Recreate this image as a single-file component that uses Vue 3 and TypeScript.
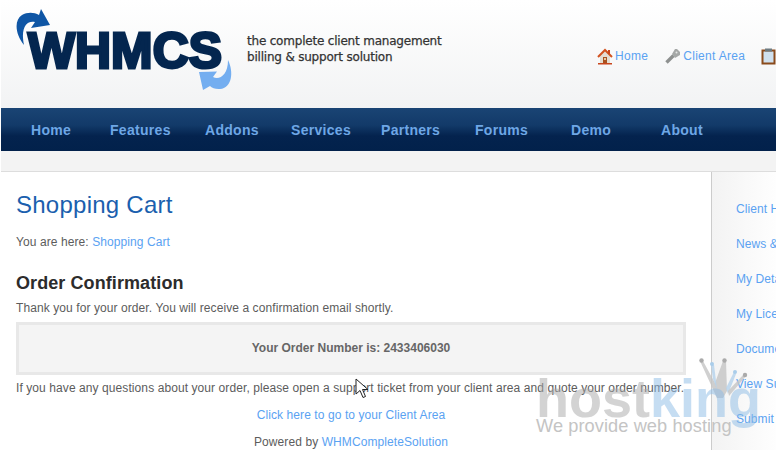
<script setup lang="ts">
const navItems = ['Home', 'Features', 'Addons', 'Services', 'Partners', 'Forums', 'Demo', 'About']
const sideLinks = ['Client Home', 'News & Updates', 'My Details', 'My Licenses', 'Documentation', 'View Support Tickets', 'Submit Ticket']
</script>

<template>
  <div class="page">
    <header class="top">
      <svg class="logo" width="222" height="86" viewBox="15 7 222 86">
        <text class="logo-text" x="28" y="67.5" textLength="194" lengthAdjust="spacingAndGlyphs">WHMCS</text>
        <path fill="#0f56a5" d="M24 45C15 34 14 20 22 15C27 12 34 12 39 15L41 9L50 25L31 28L35 22C28 20 20 26 24 45Z" />
        <path fill="#74aef0" d="M228 60C234 72 232 88 220 89C216 89.5 212 88 210 86L203 90L199 72L217 71.5L213 77C219 80 228 76 228 60Z" />
      </svg>
      <div class="tagline">the complete client management<br />billing &amp; support solution</div>
      <div class="toplinks">
        <a class="toplink">
          <svg width="16" height="17" viewBox="0 0 16 17">
            <path fill="#e4ddd2" d="M3 7l5-5 5 5v8H3z" />
            <path fill="none" stroke="#d2521f" stroke-width="2" d="M1 9l7-7 7 7" />
            <path fill="#c9461c" d="M11 2h2v4h-2z" />
            <path fill="#a8521f" d="M6 9h4v6H6z" />
            <path fill="#e9c9a0" d="M7 10h2v2H7z" />
            <path fill="#c9461c" d="M1 15h14v1.5H1z" />
          </svg>
          Home
        </a>
        <a class="toplink">
          <svg width="17" height="17" viewBox="0 0 17 17">
            <path fill="none" stroke="#8e9190" stroke-width="3.4" d="M2.5 14.5l7-7" />
            <path fill="#a5a8a7" d="M8 6l3-5h2l3 3v3l-5 3z" />
            <circle cx="12.5" cy="4.5" r="1" fill="#e4e6e5" />
          </svg>
          Client Area
        </a>
        <a class="toplink">
          <svg width="16" height="17" viewBox="0 0 16 17">
            <rect x="1.5" y="2.5" width="12" height="13" fill="#cfe0ee" stroke="#8a4b1c" stroke-width="2" />
            <rect x="4" y="0.5" width="7" height="3" fill="#6d7a80" />
          </svg>
          Support
        </a>
      </div>
    </header>

    <nav class="nav">
      <a v-for="item in navItems" :key="item" class="nav-item">{{ item }}</a>
    </nav>
    <div class="strip"></div>

    <div class="columns">
      <main class="content">
        <h1>Shopping Cart</h1>
        <p class="crumb">You are here: <a>Shopping Cart</a></p>
        <h2>Order Confirmation</h2>
        <p class="thanks">Thank you for your order. You will receive a confirmation email shortly.</p>
        <div class="order-box">Your Order Number is: 2433406030</div>
        <p class="questions">If you have any questions about your order, please open a support ticket from your client area and quote your order number.</p>
        <p class="center go"><a>Click here to go to your Client Area</a></p>
        <p class="center powered">Powered by <a>WHMCompleteSolution</a></p>
      </main>
      <aside class="side">
        <a v-for="link in sideLinks" :key="link">{{ link }}</a>
      </aside>
    </div>

    <div class="watermark">
      <svg class="crown" width="50" height="42" viewBox="0 0 50 42">
        <path fill="#c4c4c4" opacity="0.8" d="M1 3h3l12 22 8-22h3l1 30-4 7H18z" />
        <path fill="#b4d2ec" opacity="0.8" d="M12 7h3l3 24-4-10zM35 14l2 2-8 20-2-6z" />
        <path fill="#c4c4c4" opacity="0.8" d="M45 16l2 2-17 20-1-5z" />
        <circle cx="2.5" cy="2.5" r="2.2" fill="#aaa" />
        <circle cx="13" cy="6" r="2" fill="#a9cdea" />
        <circle cx="25.5" cy="2.5" r="2.2" fill="#aaa" />
        <circle cx="36" cy="14" r="2" fill="#a9cdea" />
        <circle cx="46" cy="17" r="2.2" fill="#aaa" />
      </svg>
      <div class="wm-name"><span class="wm-host">host</span><span class="wm-king">king</span></div>
      <div class="wm-sub">We provide web hosting</div>
    </div>

    <svg class="cursor" width="14" height="21" viewBox="0 0 14 21">
      <path fill="#fff" stroke="#222" stroke-width="1" d="M1 1v15l4-3.5 3 7 2.5-1-3-7H13z" />
    </svg>
  </div>
</template>

<style scoped>
.page {
  position: relative;
  width: 776px;
  height: 450px;
  overflow: hidden;
  box-sizing: border-box;
  border-left: 1px solid #fff;
  background: #fff;
  font: 12px "Liberation Sans", Arial, sans-serif;
  letter-spacing: 0.085px;
  color: #5c5c5c;
}
a {
  color: #5aa2f2;
}
.top {
  display: flex;
  height: 108px;
  background: linear-gradient(#fff, #f2f3f4);
}
.logo {
  flex: none;
  margin: 7px 0 0 14px;
}
.logo-text {
  font: 900 50px "Liberation Sans", Arial, sans-serif;
  fill: #04264f;
  stroke: #04264f;
  stroke-width: 3px;
  stroke-linejoin: miter;
}
.tagline {
  flex: none;
  width: 350px;
  margin: 33px 0 0 10px;
  font: 12px/16px "DejaVu Sans", Verdana, sans-serif;
  color: #333;
  -webkit-text-stroke: 0.25px #333;
  letter-spacing: -0.2px;
}
.toplinks {
  flex: none;
  display: flex;
  gap: 16px;
  margin-top: 48px;
  white-space: nowrap;
  letter-spacing: 0.3px;
}
.toplink {
  display: flex;
  gap: 2px;
  height: 17px;
  line-height: 17px;
}
.nav {
  display: grid;
  grid-template-columns: 79px 95px 86px 90px 94px 96px 90px auto;
  align-items: center;
  height: 43px;
  padding-left: 30px;
  background: linear-gradient(#1a4474 0, #123a69 40%, #04234e 65%, #02214b 100%);
}
.nav-item {
  font-size: 14px;
  font-weight: bold;
  letter-spacing: 0.3px;
  color: #6ea7e6;
}
.strip {
  height: 20px;
  background: #f3f3f3;
  border-bottom: 1px solid #ddd;
}
.columns {
  display: flex;
  height: 278px;
}
.content {
  flex: none;
  width: 670px;
  padding: 0 24px 0 15px;
}
h1 {
  margin: 19px 0 0;
  font-size: 24px;
  font-weight: normal;
  letter-spacing: 0.25px;
  line-height: 28px;
  color: #1b5fae;
}
p {
  margin: 0;
  line-height: 16px;
}
.crumb {
  margin-top: 15px;
}
h2 {
  margin: 22px 0 0;
  font-size: 18px;
  line-height: 22px;
  color: #2c2c2c;
}
.thanks {
  margin-top: 6px;
}
.order-box {
  margin-top: 6px;
  padding: 14px 0;
  height: 19px;
  line-height: 19px;
  border: 3px solid #e8e8e8;
  background: #f4f4f4;
  text-align: center;
  font-weight: bold;
  letter-spacing: 0;
  color: #666;
}
.questions {
  margin-top: 5px;
  white-space: nowrap;
}
.center {
  text-align: center;
}
.go {
  margin-top: 11px;
}
.powered {
  margin-top: 11px;
}
.side {
  flex: none;
  width: 200px;
  display: flex;
  flex-direction: column;
  gap: 19px;
  padding: 29px 0 0 24px;
  border-left: 1px solid #ccc;
  margin-left: 1px;
  background: linear-gradient(90deg, #f3f3f3, #fff 70px);
  white-space: nowrap;
  line-height: 16px;
}
.watermark {
  position: absolute;
  left: 535px;
  top: 358px;
  width: 232px;
  height: 84px;
  pointer-events: none;
}
.crown {
  position: absolute;
  left: 163px;
  top: 0;
}
.wm-name {
  position: absolute;
  left: 0;
  top: 9px;
  font: bold 54px/62px "Liberation Sans", Arial, sans-serif;
  letter-spacing: 0;
  opacity: 0.5;
}
.wm-host {
  color: #a9a9a9;
}
.wm-king {
  color: #8dbce6;
}
.wm-sub {
  position: absolute;
  left: 0;
  top: 56px;
  font-size: 18.2px;
  line-height: 24px;
  color: #c4c4c4;
  white-space: nowrap;
}
.cursor {
  position: absolute;
  left: 354px;
  top: 378px;
}
</style>

<style>
html, body {
  margin: 0;
  overflow: hidden;
}
</style>
